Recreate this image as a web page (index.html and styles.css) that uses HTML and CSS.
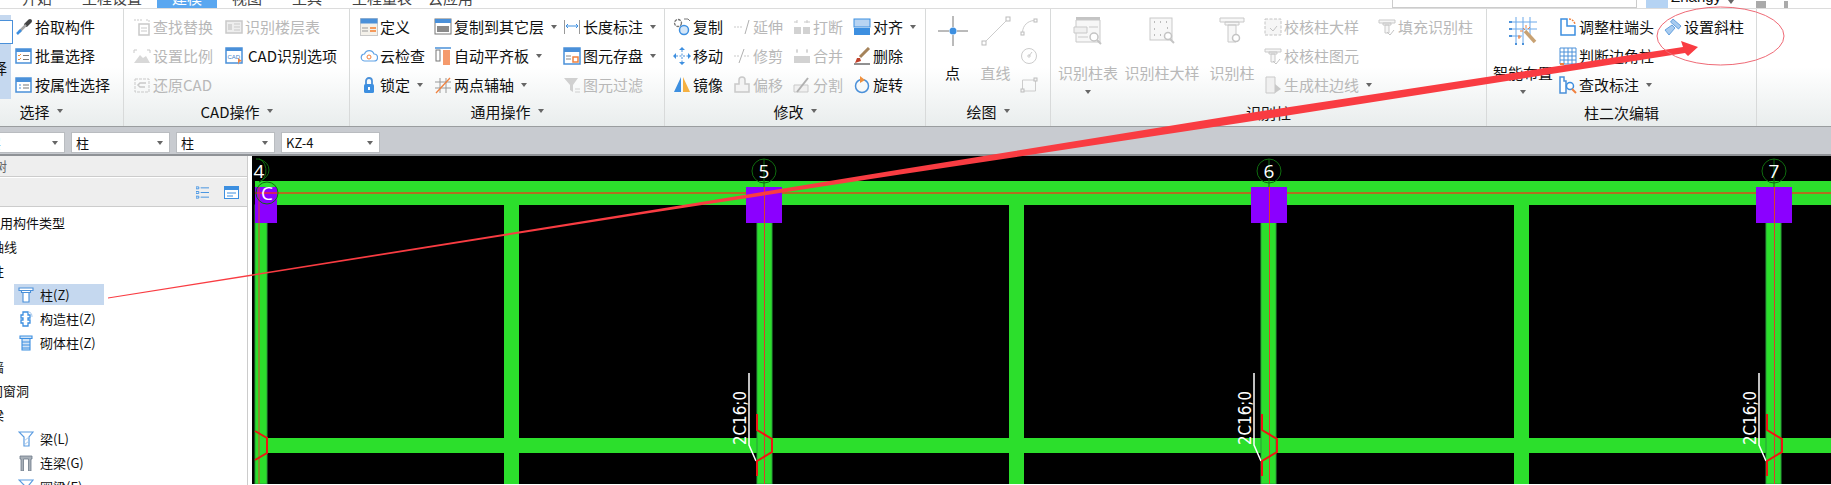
FILE: index.html
```html
<!DOCTYPE html>
<html lang="en">
<head>
    <meta charset="UTF-8">
    <meta name="viewport" content="width=device-width, initial-scale=1.0">
    <title>柱二次编辑</title>
    <link rel="stylesheet" href="styles.css">
</head>
<body>
    <svg class="defs" aria-hidden="true">
        <symbol id="pick" viewBox="0 0 18 18"><path d="M11 7 15 3" stroke="#444" stroke-width="4" stroke-linecap="round"/><path d="M11 7 4 14" stroke="#a5a5a5" stroke-width="2.500"/><path d="M6 12 2 16" stroke="#3d8fe0" stroke-width="2.500"/></symbol>
        <symbol id="batch" viewBox="0 0 18 18"><rect x="1" y="2" width="15" height="14" fill="#fff" stroke="#4a90d9" stroke-width="1.5"/><rect x="1" y="2" width="15" height="3" fill="#4a90d9"/><path d="M3 8l1 1 2-2M3 12l1 1 2-2" stroke="#f0913e" fill="none"/><path d="M8 8.5h6M8 12.5h6" stroke="#777"/></symbol>
        <symbol id="attr" viewBox="0 0 18 18"><rect x="1" y="2" width="15" height="14" fill="#fff" stroke="#4a90d9" stroke-width="1.5"/><rect x="1" y="2" width="15" height="4" fill="#4a90d9"/><path d="M4 9h2M4 12h2" stroke="#4a90d9"/><path d="M8 9h6M8 12h6" stroke="#777"/></symbol>
        <symbol id="find" viewBox="0 0 18 18"><path d="M1 2h9M13 2h3v3" stroke="#c9c9c9" stroke-dasharray="2 1" fill="none"/><rect x="6" y="6" width="10" height="11" fill="none" stroke="#c9c9c9" stroke-width="1.5"/><path d="M8 10h6M8 13h6" stroke="#c9c9c9"/></symbol>
        <symbol id="floors" viewBox="0 0 18 18"><rect x="1" y="3" width="16" height="12" fill="#eee" stroke="#c9c9c9" stroke-width="1.5"/><rect x="3" y="6" width="4" height="6" fill="#d5d5d5"/><path d="M9 6h6M9 9h6M9 12h6" stroke="#c9c9c9"/></symbol>
        <symbol id="scale" viewBox="0 0 18 18"><path d="M1 3h3M14 3h3M1 3v3M17 3v3" stroke="#c9c9c9" fill="none"/><path d="M1 16 7 8l3 3 3-2 4 7z" fill="#d8d8d8"/></symbol>
        <symbol id="cad" viewBox="0 0 18 18"><rect x="1" y="1" width="16" height="15" fill="#fff" stroke="#4a90d9" stroke-width="1.5"/><rect x="1" y="1" width="16" height="3" fill="#4a90d9"/><text x="2.5" y="12" class="cad-text">CAD</text><path d="M13 11l4 3-3 1-1 3z" fill="#f0813e"/></symbol>
        <symbol id="restore" viewBox="0 0 18 18"><path d="M2 3h14v13H2z" fill="none" stroke="#c9c9c9" stroke-dasharray="3 1"/><path d="M13 7H7l-2 2 2 2h5" fill="none" stroke="#c9c9c9" stroke-width="1.5"/></symbol>
        <symbol id="define" viewBox="0 0 18 18"><rect x=".5" y=".5" width="17" height="17" fill="#f4f1ea" stroke="#c9c9c9"/><rect x=".5" y=".5" width="17" height="5" fill="#4a90d9"/><path d="M2 10h6M2 13h6" stroke="#999"/><path d="M10 10h6M10 13h6" stroke="#f59a5c" stroke-width="2"/></symbol>
        <symbol id="cloud" viewBox="0 0 18 18"><path d="M5 14a3.500 3.500 0 0 1-.5-7 5 5 0 0 1 9.500 0 3.500 3.500 0 0 1 0 7z" fill="#fff" stroke="#63a4e6" stroke-width="1.200"/><circle cx="9" cy="10" r="2" fill="none" stroke="#f0813e"/></symbol>
        <symbol id="lock" viewBox="0 0 18 18"><path d="M6 8V5a3 3 0 0 1 6 0v3" fill="none" stroke="#4a90d9" stroke-width="1.800"/><rect x="4" y="8" width="10" height="9" rx="1.5" fill="#3d8fe0"/><rect x="8" y="11" width="2" height="3" fill="#fff"/></symbol>
        <symbol id="copyfloor" viewBox="0 0 18 18"><rect x="1" y="1" width="16" height="15" fill="#fff" stroke="#777"/><rect x="1" y="1" width="16" height="4" fill="#4a90d9"/><rect x="3" y="8" width="12" height="6" fill="#8a8a8a"/></symbol>
        <symbol id="alignslab" viewBox="0 0 18 18"><path d="M1 1h16" stroke="#4a90d9" stroke-width="1.5"/><rect x="2" y="3" width="4" height="11" fill="#fff" stroke="#777"/><rect x="9" y="3" width="7" height="15" fill="#f59a6c"/></symbol>
        <symbol id="twopoint" viewBox="0 0 18 18"><path d="M6 2v15M12 2v15M1 6h16M1 12h16" stroke="#999" fill="none"/><path d="M2 17 16 2" stroke="#f0813e" stroke-width="1.300"/></symbol>
        <symbol id="length" viewBox="0 0 18 18"><path d="M1.5 2v14M16.5 2v14" stroke="#999"/><path d="M3 8h12M5 6 3 8l2 2M13 6l2 2-2 2" stroke="#3d8fe0" fill="none"/></symbol>
        <symbol id="store" viewBox="0 0 18 18"><rect x="1" y="1" width="16" height="16" fill="#fff" stroke="#4a90d9" stroke-width="1.5"/><rect x="1" y="1" width="16" height="4" fill="#4a90d9"/><path d="M3 9h5M3 12h5" stroke="#888"/><rect x="10" y="10" width="5" height="5" fill="none" stroke="#f0813e" stroke-width="1.5"/></symbol>
        <symbol id="filter" viewBox="0 0 18 18"><path d="M1 2h14L10 9v7l-3-2V9z" fill="#d0d0d0"/><path d="M12 13h5M12 16h5" stroke="#d0d0d0"/></symbol>
        <symbol id="copy" viewBox="0 0 18 18"><circle cx="5" cy="5" r="3.500" fill="none" stroke="#777" stroke-width="1.300" stroke-dasharray="3 1"/><circle cx="11" cy="12" r="4.500" fill="#d4e6f8" stroke="#3d8fe0" stroke-width="1.5"/><path d="M11 1h4l2 2" stroke="#777" fill="none"/></symbol>
        <symbol id="move" viewBox="0 0 18 18"><path d="M9 3v12M3 9h12" stroke="#4a90d9" stroke-dasharray="2 1.500"/><path d="M9 0l3 3H6zM9 18l3-3H6zM0 9l3-3v6zM18 9l-3-3v6z" fill="#3d8fe0"/></symbol>
        <symbol id="mirror" viewBox="0 0 18 18"><path d="M8 1v15H1z" fill="#3d8fe0"/><path d="M10 1v15h7z" fill="#f5b041"/></symbol>
        <symbol id="extend" viewBox="0 0 18 18"><path d="M1 9h9" stroke="#c9c9c9" stroke-dasharray="2 1"/><path d="M12 16 16 2" stroke="#b0b0b0"/></symbol>
        <symbol id="trim" viewBox="0 0 18 18"><path d="M1 9h5M11 9h6" stroke="#c9c9c9" stroke-dasharray="2 1"/><path d="M6 16 11 2" stroke="#b0b0b0"/></symbol>
        <symbol id="offset" viewBox="0 0 18 18"><path d="M6 8V4a3 3 0 0 1 6 0v4h4v8H2V8z" fill="#f3f3f3" stroke="#c9c9c9" stroke-width="1.5"/></symbol>
        <symbol id="break" viewBox="0 0 18 18"><rect x="1" y="9" width="7" height="7" fill="#d2d2d2"/><rect x="10" y="9" width="7" height="7" fill="#d2d2d2"/><path d="M4 2v3M14 2v3M1 4h3M11 4h6" stroke="#c9c9c9"/></symbol>
        <symbol id="merge" viewBox="0 0 18 18"><rect x="1" y="9" width="16" height="7" fill="#d2d2d2"/><path d="M4 2v4M14 2v4M3 4h2M13 4h2" stroke="#c9c9c9"/></symbol>
        <symbol id="split" viewBox="0 0 18 18"><path d="M1 9h14v7H1z" fill="#f0f0f0" stroke="#c9c9c9"/><path d="M4 16 15 2" stroke="#b0b0b0" stroke-width="2"/></symbol>
        <symbol id="align" viewBox="0 0 18 18"><rect x="1" y="1" width="16" height="8" fill="#b8d4f2" stroke="#3d8fe0"/><rect x="1" y="10" width="16" height="7" fill="#3d8fe0"/></symbol>
        <symbol id="delete" viewBox="0 0 18 18"><path d="M7 10 16 1" stroke="#a5835a" stroke-width="3"/><path d="M2 16l2-5 3 0 1 3z" fill="#c0402a"/><path d="M1 17h16" stroke="#222"/></symbol>
        <symbol id="rotate" viewBox="0 0 18 18"><circle cx="9" cy="10" r="6.500" fill="none" stroke="#4a90d9" stroke-width="1.5"/><path d="M7 0v7l5-3z" fill="#f0913e"/></symbol>
        <symbol id="arc" viewBox="0 0 18 18"><rect x="1" y="14" width="3" height="3" fill="none" stroke="#bbb"/><rect x="14" y="1" width="3" height="3" fill="none" stroke="#bbb"/><path d="M2.5 14C3 7 8 3 14 2.5" fill="none" stroke="#ccc"/></symbol>
        <symbol id="circle" viewBox="0 0 18 18"><circle cx="9" cy="9" r="7.500" fill="none" stroke="#ccc"/><circle cx="9" cy="9" r="1.200" fill="none" stroke="#ccc"/><path d="M9 9l3-4" stroke="#ccc"/></symbol>
        <symbol id="rectline" viewBox="0 0 18 18"><path d="M2.5 4h13v11h-13z" fill="none" stroke="#ccc"/><rect x="1" y="13" width="3" height="3" fill="#f5f5f5" stroke="#bbb"/><rect x="14" y="2" width="3" height="3" fill="#f5f5f5" stroke="#bbb"/></symbol>
        <symbol id="checkmodel" viewBox="0 0 18 18"><rect x="1" y="1" width="16" height="16" fill="#f6f6f6" stroke="#c4c4c4" stroke-dasharray="3 1.500"/><path d="M6 10l3 3 4-5" fill="none" stroke="#c4c4c4"/></symbol>
        <symbol id="checkcol" viewBox="0 0 18 18"><path d="M1 2h16v3H1zM5 5h8v2H5zM7 7h4v8H7z" fill="#f6f6f6" stroke="#c9c9c9"/><path d="M9 14l3 3 4-5" fill="none" stroke="#c4c4c4"/></symbol>
        <symbol id="edges" viewBox="0 0 18 18"><path d="M2 1h9v16H2z" fill="#f0f0f0" stroke="#c9c9c9"/><path d="M11 8l6 5-6 4z" fill="#c9c9c9"/></symbol>
        <symbol id="adjust" viewBox="0 0 18 18"><path d="M2 1v16h14V8H8V1z" fill="#fff" stroke="#3d8fe0" stroke-width="1.5"/><path d="M10 1c3 0 5 2 6 5" fill="none" stroke="#f0813e" stroke-width="1.5" stroke-dasharray="2 1"/></symbol>
        <symbol id="corner" viewBox="0 0 18 18"><path d="M1 1h16v16H1zM1 5h16M1 9h16M1 13h16M5 1v16M9 1v16M13 1v16" fill="#fff" stroke="#4a90d9"/><path d="M1 17h4" stroke="#f0813e" stroke-width="2"/></symbol>
        <symbol id="marks" viewBox="0 0 18 18"><path d="M1 1h4v4h2v12H1z" fill="#fff" stroke="#4a90d9" stroke-width="1.5"/><circle cx="11" cy="10" r="3.500" fill="#fff" stroke="#3d8fe0" stroke-width="1.5"/><path d="M13 13l4 4" stroke="#f0813e" stroke-width="2"/></symbol>
        <symbol id="slant" viewBox="0 0 18 18"><path d="M9 1l8 7-2.500 3-8-7zM8 7 1 12l4 5 6-7z" fill="#a8cbef" stroke="#4a90d9" stroke-width=".8"/></symbol>
        <symbol id="point" viewBox="0 0 30 30"><path d="M15 0v11M15 19v11M0 15h11M19 15h11" stroke="#777"/><circle cx="15" cy="15" r="3.500" fill="#3d8fe0"/></symbol>
        <symbol id="line" viewBox="0 0 30 30"><rect x="1" y="25" width="4" height="4" fill="none" stroke="#bbb"/><rect x="25" y="1" width="4" height="4" fill="none" stroke="#bbb"/><path d="M5 25 25 5" stroke="#ccc"/></symbol>
        <symbol id="coltable" viewBox="0 0 30 30"><path d="M3 1h24v3H3z" fill="#c4c4c4"/><path d="M3 4h24v22H3z" fill="#f7f7f7" stroke="#c9c9c9"/><path d="M1 11h13v6H1z" fill="#f0f0f0" stroke="#c9c9c9"/><path d="M5 21h10M16 11h9" stroke="#c9c9c9"/><circle cx="21" cy="21" r="4" fill="#fff" stroke="#c4c4c4" stroke-width="1.5"/><path d="M24 24l4 4" stroke="#c4c4c4" stroke-width="2"/></symbol>
        <symbol id="colsample" viewBox="0 0 30 30"><rect x="3" y="2" width="22" height="22" fill="#f7f7f7" stroke="#c9c9c9"/><path d="M7 6h1M13 6h1M19 6h1M7 13h1M7 19h1M13 19h1M20 12h1" stroke="#bbb" stroke-width="2"/><circle cx="21" cy="20" r="3.500" fill="#fff" stroke="#c4c4c4" stroke-width="1.5"/><path d="M23 23l4 4" stroke="#c4c4c4" stroke-width="2"/></symbol>
        <symbol id="colfind" viewBox="0 0 30 30"><path d="M3 2h24v4H3zM8 6h14v3H8zM11 9h8v17h-8z" fill="#f7f7f7" stroke="#c9c9c9"/><circle cx="19" cy="22" r="3.500" fill="#fff" stroke="#c4c4c4" stroke-width="1.5"/></symbol>
        <symbol id="smart" viewBox="0 0 30 30"><path d="M8 1v27M15 1v27M22 1v20M2 6h27M2 13h27M2 20h12" stroke="#6aa8ea" fill="none"/><path d="M1 6h3M1 13h3M1 20h3M8 27v2M15 27v2" stroke="#4a90d9" stroke-width="2" fill="none"/><path d="M17 15 27 26" stroke="#c8a273" stroke-width="3.500"/><path d="M15 12l2 2M18 9v3M12 15h3M22 11l-2 2M10 21h3M11 19v4" stroke="#f0813e"/></symbol>
        <symbol id="tcol" viewBox="0 0 16 16"><path d="M1 1h14v2.500H1zM3.500 3.500h9v2h-9zM5 5.500h6V15H5z" fill="#fff" stroke="#4a90d9" stroke-width="1.100"/></symbol>
        <symbol id="tcons" viewBox="0 0 16 16"><path d="M5 1h5v3h2v3h-2v2h2v3h-2v3H5v-3H3V9h2V7H3V4h2z" fill="#fff" stroke="#3d8fe0" stroke-width="1.300"/><path d="M10 1c3 0 4 2 4 5" fill="none" stroke="#a9c9ec"/></symbol>
        <symbol id="tbrick" viewBox="0 0 16 16"><path d="M2 1h12v2.500H2zM4 3.500h8V15H4z" fill="#cfe2f6" stroke="#3d8fe0" stroke-width="1.100"/><path d="M4 7h8M4 10h8M4 13h8" stroke="#3d8fe0"/></symbol>
        <symbol id="tbeam" viewBox="0 0 16 16"><path d="M1 1h14l-4 5v9H6V6z" fill="#fff" stroke="#5a9be0" stroke-width="1.200"/><path d="M6 10l5-4M6 14l5-4" stroke="#a9c9ec"/></symbol>
        <symbol id="tlink" viewBox="0 0 16 16"><path d="M2 1h12v3h-1v12h-2.500V4h-5v12H3V4H2z" fill="#a8b0b8" stroke="#6d7a88" stroke-width=".8"/></symbol>
    </svg>

    <div class="tabs">
        <span class="tab tab-first">开始</span>
        <span class="tab">工程设置</span>
        <span class="tab active">建模</span>
        <span class="tab">视图</span>
        <span class="tab">工具</span>
        <span class="tab">工程量表</span>
        <span class="tab tab-last">云应用</span>
        <div class="top-right">
            <div class="search"></div>
            <div class="avatar"></div>
            <span class="user">Zhangy</span>
            <i class="caret caret-top"></i>
            <i class="top-icon"></i>
            <i class="top-icon small"></i>
        </div>
    </div>

    <div class="ribbon">
        <section class="group g-select">
            <div class="tools">
                <div class="big-select">
                    <div class="big-select-icon"></div>
                    <span>选择</span>
                </div>
                <div class="col">
                    <div class="tool"><svg class="ic"><use href="#pick"/></svg>拾取构件</div>
                    <div class="tool"><svg class="ic"><use href="#batch"/></svg>批量选择</div>
                    <div class="tool"><svg class="ic"><use href="#attr"/></svg>按属性选择</div>
                </div>
            </div>
            <div class="group-label">选择<i class="caret"></i></div>
        </section>

        <section class="group g-cad">
            <div class="tools">
                <div class="col w92">
                    <div class="tool off"><svg class="ic"><use href="#find"/></svg>查找替换</div>
                    <div class="tool off"><svg class="ic"><use href="#scale"/></svg>设置比例</div>
                    <div class="tool off"><svg class="ic"><use href="#restore"/></svg>还原CAD</div>
                </div>
                <div class="col">
                    <div class="tool off"><svg class="ic"><use href="#floors"/></svg>识别楼层表</div>
                    <div class="tool"><svg class="ic ic-wide"><use href="#cad"/></svg>CAD识别选项</div>
                </div>
            </div>
            <div class="group-label">CAD操作<i class="caret"></i></div>
        </section>

        <section class="group g-common">
            <div class="tools">
                <div class="col w74">
                    <div class="tool"><svg class="ic"><use href="#define"/></svg>定义</div>
                    <div class="tool"><svg class="ic"><use href="#cloud"/></svg>云检查</div>
                    <div class="tool"><svg class="ic"><use href="#lock"/></svg>锁定<i class="caret"></i></div>
                </div>
                <div class="col w129">
                    <div class="tool"><svg class="ic"><use href="#copyfloor"/></svg>复制到其它层<i class="caret"></i></div>
                    <div class="tool"><svg class="ic"><use href="#alignslab"/></svg>自动平齐板<i class="caret"></i></div>
                    <div class="tool"><svg class="ic"><use href="#twopoint"/></svg>两点辅轴<i class="caret"></i></div>
                </div>
                <div class="col">
                    <div class="tool"><svg class="ic"><use href="#length"/></svg>长度标注<i class="caret"></i></div>
                    <div class="tool"><svg class="ic"><use href="#store"/></svg>图元存盘<i class="caret"></i></div>
                    <div class="tool off"><svg class="ic"><use href="#filter"/></svg>图元过滤</div>
                </div>
            </div>
            <div class="group-label">通用操作<i class="caret"></i></div>
        </section>

        <section class="group g-modify">
            <div class="tools">
                <div class="col w60">
                    <div class="tool"><svg class="ic"><use href="#copy"/></svg>复制</div>
                    <div class="tool"><svg class="ic"><use href="#move"/></svg>移动</div>
                    <div class="tool"><svg class="ic"><use href="#mirror"/></svg>镜像</div>
                </div>
                <div class="col w60">
                    <div class="tool off"><svg class="ic"><use href="#extend"/></svg>延伸</div>
                    <div class="tool off"><svg class="ic"><use href="#trim"/></svg>修剪</div>
                    <div class="tool off"><svg class="ic"><use href="#offset"/></svg>偏移</div>
                </div>
                <div class="col w60">
                    <div class="tool off"><svg class="ic"><use href="#break"/></svg>打断</div>
                    <div class="tool off"><svg class="ic"><use href="#merge"/></svg>合并</div>
                    <div class="tool off"><svg class="ic"><use href="#split"/></svg>分割</div>
                </div>
                <div class="col">
                    <div class="tool"><svg class="ic"><use href="#align"/></svg>对齐<i class="caret"></i></div>
                    <div class="tool"><svg class="ic"><use href="#delete"/></svg>删除</div>
                    <div class="tool"><svg class="ic"><use href="#rotate"/></svg>旋转</div>
                </div>
            </div>
            <div class="group-label">修改<i class="caret"></i></div>
        </section>

        <section class="group g-draw">
            <div class="tools">
                <div class="big w43"><svg class="ic-big"><use href="#point"/></svg><span>点</span></div>
                <div class="big w43 off"><svg class="ic-big"><use href="#line"/></svg><span>直线</span></div>
                <div class="col col-icons">
                    <div class="tool"><svg class="ic"><use href="#arc"/></svg></div>
                    <div class="tool"><svg class="ic"><use href="#circle"/></svg></div>
                    <div class="tool"><svg class="ic"><use href="#rectline"/></svg></div>
                </div>
            </div>
            <div class="group-label">绘图<i class="caret"></i></div>
        </section>

        <section class="group g-detect">
            <div class="tools">
                <div class="big w64 off"><svg class="ic-big"><use href="#coltable"/></svg><span>识别柱表</span><i class="caret"></i></div>
                <div class="big w80 off"><svg class="ic-big"><use href="#colsample"/></svg><span>识别柱大样</span></div>
                <div class="big w50 off"><svg class="ic-big"><use href="#colfind"/></svg><span>识别柱</span></div>
                <div class="col w114">
                    <div class="tool off"><svg class="ic"><use href="#checkmodel"/></svg>校核柱大样</div>
                    <div class="tool off"><svg class="ic"><use href="#checkcol"/></svg>校核柱图元</div>
                    <div class="tool off"><svg class="ic"><use href="#edges"/></svg>生成柱边线<i class="caret"></i></div>
                </div>
                <div class="col">
                    <div class="tool off"><svg class="ic"><use href="#checkcol"/></svg>填充识别柱</div>
                </div>
            </div>
            <div class="group-label">识别柱</div>
        </section>

        <section class="group g-edit">
            <div class="tools">
                <div class="big w64"><svg class="ic-big"><use href="#smart"/></svg><span>智能布置</span><i class="caret"></i></div>
                <div class="col w105">
                    <div class="tool"><svg class="ic"><use href="#adjust"/></svg>调整柱端头</div>
                    <div class="tool"><svg class="ic"><use href="#corner"/></svg>判断边角柱</div>
                    <div class="tool"><svg class="ic"><use href="#marks"/></svg>查改标注<i class="caret"></i></div>
                </div>
                <div class="col">
                    <div class="tool"><svg class="ic"><use href="#slant"/></svg>设置斜柱</div>
                </div>
            </div>
            <div class="group-label">柱二次编辑</div>
        </section>
    </div>

    <div class="selectors">
        <div class="select select-first">首层<i class="caret"></i></div>
        <div class="select">柱<i class="caret"></i></div>
        <div class="select">柱<i class="caret"></i></div>
        <div class="select">KZ-4<i class="caret"></i></div>
    </div>

    <div class="main">
        <aside class="sidebar">
            <div class="side-title">导航树</div>
            <div class="side-tools">
                <svg class="side-icon" viewBox="0 0 14 14"><path d="M0 1h3v2H0zM0 6h3v2H0zM0 11h3v2H0z" fill="#fff" stroke="#3d8fe0"/><path d="M5 2h9M5 7h9M5 12h9" stroke="#3d8fe0"/></svg>
                <svg class="side-icon wide" viewBox="0 0 15 13"><rect x=".5" y=".5" width="14" height="12" fill="#fff" stroke="#3d8fe0"/><rect x=".5" y=".5" width="14" height="3.500" fill="#3d8fe0"/><path d="M3 7h9M3 10h6" stroke="#3d8fe0"/></svg>
            </div>
            <ul class="tree">
                <li class="top">常用构件类型</li>
                <li class="top top-short">轴线</li>
                <li class="top top-short">柱</li>
                <li class="sub selected"><svg class="tree-icon"><use href="#tcol"/></svg>柱(Z)</li>
                <li class="sub"><svg class="tree-icon"><use href="#tcons"/></svg>构造柱(Z)</li>
                <li class="sub"><svg class="tree-icon"><use href="#tbrick"/></svg>砌体柱(Z)</li>
                <li class="top top-short">墙</li>
                <li class="top top-door">门窗洞</li>
                <li class="top top-short">梁</li>
                <li class="sub"><svg class="tree-icon"><use href="#tbeam"/></svg>梁(L)</li>
                <li class="sub"><svg class="tree-icon"><use href="#tlink"/></svg>连梁(G)</li>
                <li class="sub"><svg class="tree-icon"><use href="#tbeam"/></svg>圈梁(E)</li>
            </ul>
        </aside>

        <svg class="canvas" viewBox="252 157 1579 328">
            <defs>
                <g id="rebar">
                    <path d="M749 374v72l7 16" class="cad-white"/>
                    <path d="M757 415v16l15 9v13l-15 9v15" class="cad-red"/>
                    <text transform="translate(746 446) rotate(-90)" textLength="54" lengthAdjust="spacingAndGlyphs" class="rebar-text">2C16;0</text>
                </g>
            </defs>
            <rect x="255" y="182" width="1576" height="24" class="green"/>
            <rect x="255" y="439" width="1576" height="15" class="green"/>
            <path d="M255 194h1576" class="axis-h"/>

            <rect x="255" y="206" width="12" height="279" class="green edge"/>
            <rect x="757" y="206" width="15" height="279" class="green edge"/>
            <rect x="1261" y="206" width="15" height="279" class="green edge"/>
            <rect x="1766" y="206" width="15" height="279" class="green edge"/>
            <rect x="504" y="206" width="15" height="279" class="green"/>
            <rect x="1009" y="206" width="15" height="279" class="green"/>
            <rect x="1514" y="206" width="15" height="279" class="green"/>

            <rect x="255" y="188" width="22" height="36" class="purple"/>
            <rect x="746" y="188" width="36" height="36" class="purple"/>
            <rect x="1251" y="188" width="36" height="36" class="purple"/>
            <rect x="1756" y="188" width="36" height="36" class="purple"/>

            <path d="M259 188v297M764.5 188v297M1269.5 188v297M1774.5 188v297" class="axis-v"/>
            <path d="M255 194h22" class="axis-red"/>

            <path d="M255 432l12 7v15l-12 7" class="cad-red"/>
            <use href="#rebar"/>
            <use href="#rebar" x="505"/>
            <use href="#rebar" x="1010"/>

            <path d="M256 160a8 11 0 0 1 3 23q10-5 10-12 0-8-10-11" class="bubble"/>
            <circle cx="267" cy="194" r="11" class="bubble"/>
            <circle cx="764" cy="172" r="12" class="bubble"/>
            <circle cx="1269" cy="172" r="12" class="bubble"/>
            <circle cx="1774" cy="172" r="12" class="bubble"/>
            <path d="M764 160v28M1269 160v28M1774 160v28" class="bubble"/>
            <text x="259" y="179" class="axis-text">4</text>
            <text x="267" y="201" class="axis-text">C</text>
            <text x="764" y="179" class="axis-text">5</text>
            <text x="1269" y="179" class="axis-text">6</text>
            <text x="1774" y="179" class="axis-text">7</text>
        </svg>
    </div>

    <!-- red markup drawn over the screenshot -->
    <svg class="markup" viewBox="0 0 1831 485">
        <polygon points="108,297.5 640,212 900,169.5 1240,114.5 1683,47 1681,41 1698,47 1688,56 1685,53 1240,123 900,174.5 640,214.5 108,298.5" class="arrow"/>
        <ellipse cx="1720.5" cy="36" rx="63.5" ry="29" class="ring"/>
    </svg>
</body>
</html>
```

FILE: styles.css
```css
* {
    box-sizing: border-box;
}
html, body {
    margin: 0;
    height: 100%;
}
body {
    position: relative;
    width: 1831px;
    height: 485px;
    overflow: hidden;
    background: #fff;
    color: #111;
    font-family: "Noto Sans CJK SC", "Liberation Sans", sans-serif;
    font-size: 15px;
}
.defs {
    position: absolute;
    width: 0;
    height: 0;
}
.cad-text {
    font-family: "Liberation Sans", sans-serif;
    font-size: 6px;
    fill: #3d7fc8;
}

/* top tab strip, only the bottom of it is in the shot */
.tabs {
    display: flex;
    align-items: flex-end;
    height: 9px;
    overflow: hidden;
    border-bottom: 1px solid #dcdcdc;
    background: #fff;
}
.tab {
    flex: none;
    height: 20px;
    padding: 0 15px;
    line-height: 20px;
    color: #444;
}
.tab-first {
    padding-left: 22px;
}
.tab-last {
    margin-left: -14px;
}
.tab.active {
    background: #5aa7f0;
    color: #fff;
}
.top-right {
    display: flex;
    flex: 1;
    align-items: flex-end;
    height: 20px;
    padding-left: 904px;
}
.search {
    flex: none;
    width: 245px;
    height: 10px;
    border: 1px solid #ccc;
    background: #fff;
}
.avatar {
    flex: none;
    width: 22px;
    height: 20px;
    margin-left: 9px;
    background: #b5d3f3;
}
.user {
    margin-left: 3px;
    font-family: "Liberation Sans", sans-serif;
    line-height: 22px;
}
.caret-top {
    margin: 0 0 4px 28px;
}
.top-icon {
    flex: none;
    width: 10px;
    height: 7px;
    margin-left: 22px;
    background: #aaa;
}
.top-icon.small {
    width: 4px;
    margin-left: 18px;
}

/* ribbon */
.ribbon {
    display: flex;
    height: 118px;
    background: linear-gradient(#fff 50%, #e9eded);
    border-bottom: 1px solid #9a9d9f;
}
.group {
    flex: none;
    display: flex;
    flex-direction: column;
    position: relative;
    border-right: 1px solid #d8dada;
}
.g-select { width: 124px; }
.g-cad { width: 226px; }
.g-common { width: 315px; }
.g-modify { width: 261px; }
.g-draw { width: 125px; }
.g-detect { width: 436px; }
.g-edit { width: 270px; }
.tools {
    display: flex;
    height: 90px;
    padding-top: 3px;
}
.g-cad .tools { padding-left: 9px; }
.g-common .tools { padding-left: 10px; }
.g-modify .tools { padding-left: 8px; }
.g-draw .tools { padding-left: 5px; }
.g-detect .tools { padding-left: 5px; }
.g-edit .tools { padding-left: 4px; }
.col {
    flex: none;
}
.w60 { width: 60px; }
.w74 { width: 74px; }
.w92 { width: 92px; }
.w105 { width: 105px; }
.w114 { width: 114px; }
.w129 { width: 129px; }
.col-icons { margin-left: 3px; }
.tool {
    display: flex;
    align-items: center;
    height: 29px;
    white-space: nowrap;
}
.off {
    color: #b8b8b8;
}
.ic {
    flex: none;
    width: 18px;
    height: 18px;
    margin-right: 2px;
}
.ic-wide {
    margin-right: 5px;
}
.group-label {
    display: flex;
    align-items: center;
    justify-content: center;
    height: 24px;
    white-space: nowrap;
}
.g-select .group-label {
    padding-right: 41px;
}
.g-detect .group-label, .g-edit .group-label {
    padding-top: 3px;
}
.caret {
    flex: none;
    display: inline-block;
    width: 0;
    height: 0;
    margin-left: 7px;
    border: 3.5px solid transparent;
    border-top: 4px solid #666;
    border-bottom: 0;
}
.big {
    flex: none;
    display: flex;
    flex-direction: column;
    align-items: center;
    padding-top: 4px;
    white-space: nowrap;
}
.big span {
    margin-top: 17px;
    line-height: 20px;
}
.big .caret {
    margin: 7px 0 0;
}
.ic-big {
    flex: none;
    width: 30px;
    height: 30px;
}
.w43 { width: 43px; }
.w50 { width: 50px; margin-left: 5px; }
.w64 { width: 64px; }
.w80 { width: 80px; margin-left: 2px; }
.g-detect .w114 { margin-left: 7px; }
.g-edit .w105 { margin-left: 4px; }
.big-select {
    flex: none;
    display: flex;
    flex-direction: column;
    align-items: center;
    width: 23px;
    height: 84px;
    margin: 3px 4px 0 -12px;
    background: #c5d8ef;
    white-space: nowrap;
}
.big-select-icon {
    flex: none;
    width: 26px;
    height: 24px;
    margin-top: 5px;
    background: #fff;
    border: 1px solid #4a90d9;
}
.big-select span {
    margin: 14px 15px 0 0;
    line-height: 20px;
}

/* row of combo boxes */
.selectors {
    display: flex;
    gap: 6px;
    height: 29px;
    margin-left: -34px;
    padding-top: 5px;
    background: #c8cbd0;
    border-bottom: 2px solid #8f9296;
}
.select {
    flex: none;
    display: flex;
    align-items: center;
    justify-content: space-between;
    width: 99px;
    height: 21px;
    padding: 0 6px 0 4px;
    border: 1px solid #b9bcc0;
    background: #fff;
    font-size: 13px;
}
.select-first {
    padding-left: 8px;
    color: #2f7fd0;
}

.main {
    display: flex;
    height: 329px;
}
.sidebar {
    flex: none;
    width: 248px;
    margin-right: 4px;
    overflow: hidden;
    border-right: 1px solid #ccc;
    font-size: 13px;
}
.side-title {
    height: 21px;
    margin-left: -32px;
    background: #eee;
    border-bottom: 1px solid #ccc;
    color: #666;
    line-height: 19px;
}
.side-tools {
    display: flex;
    align-items: center;
    height: 29px;
    margin-top: 1px;
    padding-left: 196px;
    background: #eee;
    border-bottom: 1px solid #ccc;
}
.side-icon {
    width: 13px;
    height: 13px;
}
.side-icon.wide {
    width: 15px;
    margin-left: 15px;
}
.tree {
    margin: 0;
    padding: 5px 0 0;
    list-style: none;
}
.tree li {
    display: flex;
    align-items: center;
    height: 21px;
    margin-bottom: 3px;
    white-space: nowrap;
}
.tree .top {
    margin-left: -13px;
}
.tree .top-short {
    margin-left: -9px;
}
.tree .top-door {
    margin-left: -10px;
}
.tree .sub {
    width: 90px;
    margin-left: 14px;
    padding-left: 4px;
}
.tree .selected {
    background: #c5d8ef;
}
.tree-icon {
    flex: none;
    width: 16px;
    height: 16px;
    margin-right: 6px;
}

/* drawing area */
.canvas {
    flex: none;
    display: block;
    width: 1579px;
    height: 328px;
    background: #000;
}
.green {
    fill: #2cdf2c;
}
.edge {
    stroke: #2a9b3a;
    stroke-width: 1;
}
.purple {
    fill: #8b00ff;
}
.axis-h {
    stroke: #b07020;
    stroke-width: 2;
}
.axis-v {
    stroke: #d9402a;
    stroke-width: 1;
    fill: none;
}
.axis-red {
    stroke: #d0206a;
    stroke-width: 2;
}
.cad-red {
    fill: none;
    stroke: #f01414;
    stroke-width: 2;
}
.cad-white {
    fill: none;
    stroke: #fff;
    stroke-width: 1.5;
}
.rebar-text {
    font-family: "DejaVu Sans", sans-serif;
    font-size: 18px;
    fill: #fff;
}
.bubble {
    fill: none;
    stroke: #0f6b0f;
    stroke-width: 1;
}
.axis-text {
    font-family: "Open Sans", sans-serif;
    font-size: 19px;
    fill: #fff;
    text-anchor: middle;
}

.markup {
    position: absolute;
    top: 0;
    left: 0;
    width: 1831px;
    height: 485px;
    pointer-events: none;
}
.arrow {
    fill: #f93c42;
}
.ring {
    fill: none;
    stroke: #ef6a76;
    stroke-width: 1;
}
```
